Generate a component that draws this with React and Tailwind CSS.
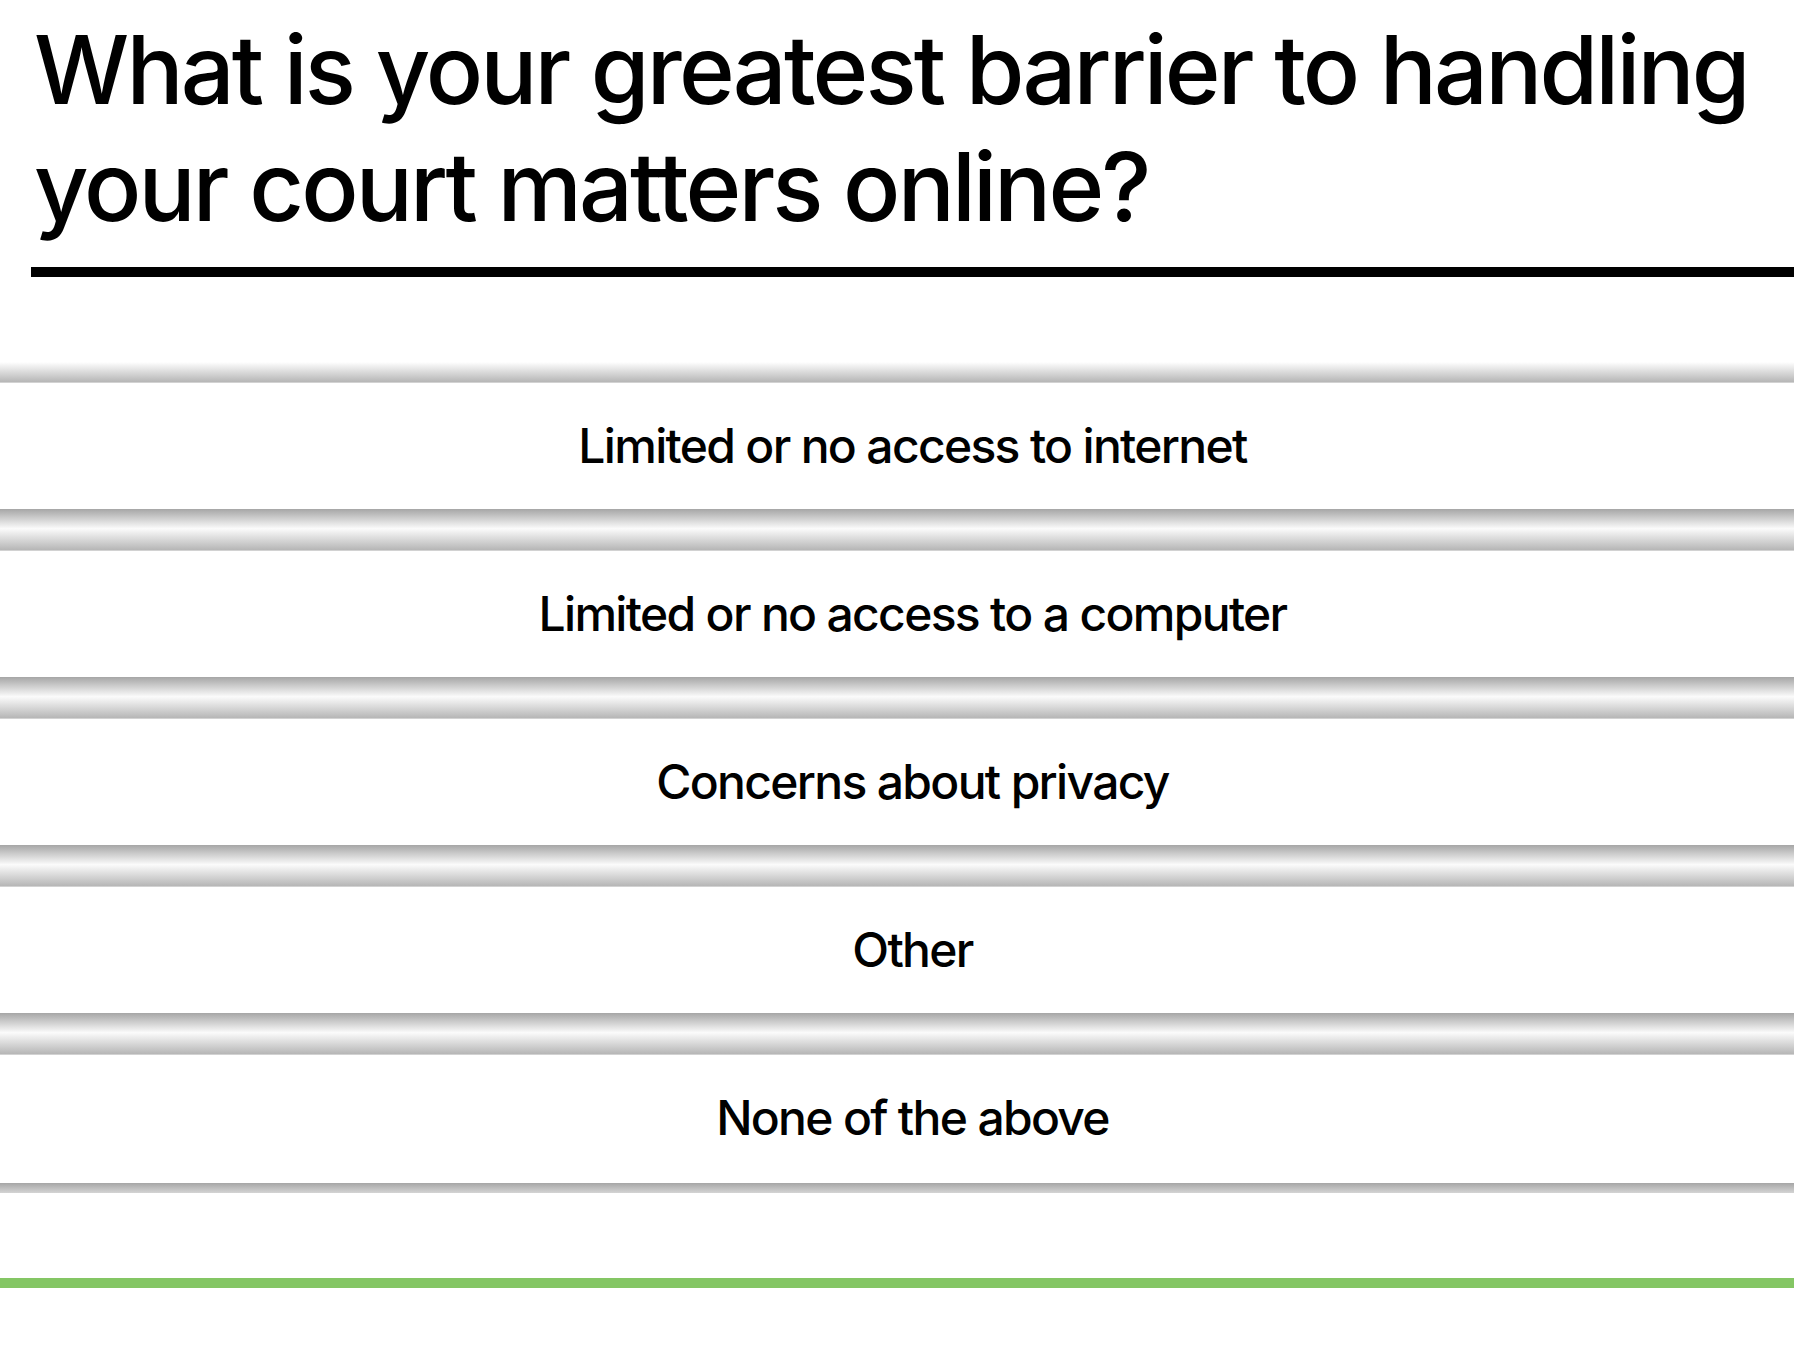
import React from "react";

const options = [
  "Limited or no access to internet",
  "Limited or no access to a computer",
  "Concerns about privacy",
  "Other",
  "None of the above",
];

const Divider = () => (
  <div className="h-[42px] w-full bg-[linear-gradient(to_bottom,#a6a6a6,#fbfbfb_48%,#b6b6b6)] border-b border-[#d2d2d2]" />
);

const OptionRow = ({ label }) => (
  <button
    type="button"
    className="flex h-[126px] w-full items-center justify-center bg-white pl-[31px] text-[48px] font-medium tracking-[-0.035em] text-black"
  >
    {label}
  </button>
);

export default function App() {
  return (
    <div className="min-h-screen w-full bg-white font-['Inter',sans-serif] text-black">
      <div className="pl-[31px]">
        <h1 className="pt-[11px] pl-[3px] text-[95px] font-medium leading-[117px] tracking-[-0.03em]">
          What is your greatest barrier to handling
          <br />
          your court matters online?
        </h1>
        <div className="mt-[22px] h-[10px] w-full bg-black" />
      </div>

      <div className="mt-[85px]">
        <div className="h-[21px] w-full bg-[linear-gradient(to_bottom,#ffffff,#b6b6b6)] border-b border-[#d2d2d2]" />
        {options.map((label, i) => (
          <React.Fragment key={label}>
            <OptionRow label={label} />
            {i < options.length - 1 && <Divider />}
          </React.Fragment>
        ))}
        <div className="mt-[2px] h-[10px] w-full bg-[linear-gradient(to_bottom,#a6a6a6,#d4d4d4)]" />
      </div>

      <div className="mt-[85px] h-[10px] w-full bg-[#84c664]" />
    </div>
  );
}
